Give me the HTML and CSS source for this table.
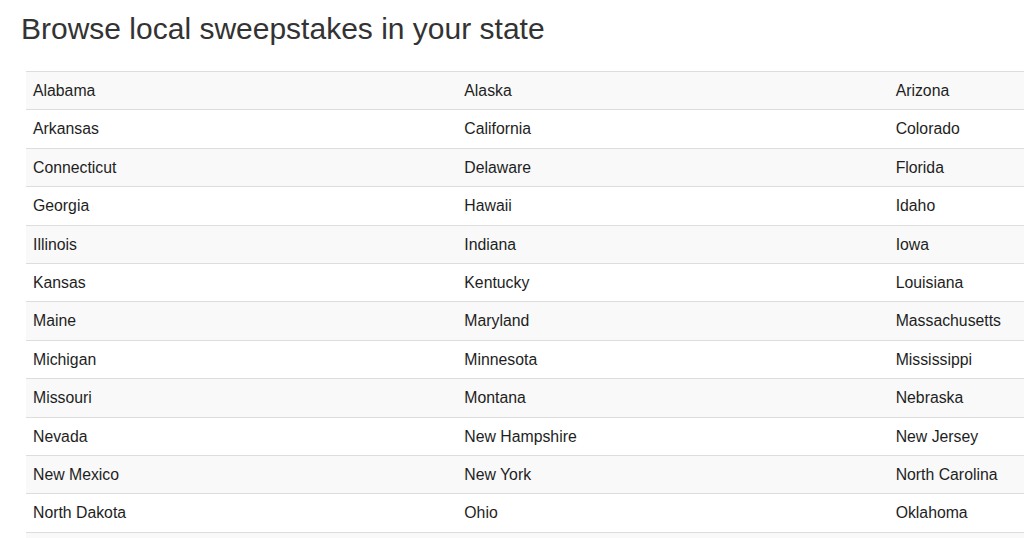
FILE: index.html
```html
<!DOCTYPE html>
<html>
<head>
<meta charset="utf-8">
<link rel="stylesheet" href="styles.css">
</head>
<body>
<h2 class="title">Browse local sweepstakes in your state</h2>
<table class="states">
<tbody>
<tr><td>Alabama</td><td>Alaska</td><td>Arizona</td></tr>
<tr><td>Arkansas</td><td>California</td><td>Colorado</td></tr>
<tr><td>Connecticut</td><td>Delaware</td><td>Florida</td></tr>
<tr><td>Georgia</td><td>Hawaii</td><td>Idaho</td></tr>
<tr><td>Illinois</td><td>Indiana</td><td>Iowa</td></tr>
<tr><td>Kansas</td><td>Kentucky</td><td>Louisiana</td></tr>
<tr><td>Maine</td><td>Maryland</td><td>Massachusetts</td></tr>
<tr><td>Michigan</td><td>Minnesota</td><td>Mississippi</td></tr>
<tr><td>Missouri</td><td>Montana</td><td>Nebraska</td></tr>
<tr><td>Nevada</td><td>New Hampshire</td><td>New Jersey</td></tr>
<tr><td>New Mexico</td><td>New York</td><td>North Carolina</td></tr>
<tr><td>North Dakota</td><td>Ohio</td><td>Oklahoma</td></tr>
<tr class="filler"><td></td><td></td><td></td></tr>
</tbody>
</table>
</body>
</html>
```
FILE: styles.css
```css
html, body {
  margin: 0;
  padding: 0;
  overflow: hidden;
  background: #fff;
}
body {
  font-family: "Liberation Sans", Arial, sans-serif;
  color: #1e1e1e;
}
.title {
  margin: 0;
  padding: 11px 0 0 21px;
  font-size: 30px;
  font-weight: 400;
  line-height: 36px;
  color: #333;
}
.states {
  margin: 24px 0 0 26px;
  width: 1294px;
  border-collapse: collapse;
  table-layout: fixed;
  font-size: 15.8px;
  line-height: 21.4px;
}
.states td {
  padding: 8px 7px;
  border-top: 1px solid #ddd;
  vertical-align: top;
  white-space: nowrap;
}
.states tr:nth-child(odd) td {
  background: #f9f9f9;
}
.states .filler td {
  height: 21.4px;
}
```
